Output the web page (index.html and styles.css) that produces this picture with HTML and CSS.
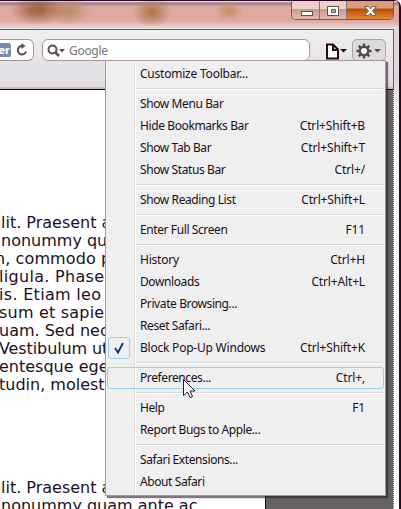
FILE: index.html
```html
<!DOCTYPE html>
<html lang="en"><head><meta charset="utf-8"><title>Browser settings menu</title><link rel="stylesheet" href="styles.css"></head>
<body><div class="window">
<header class="titlebar"><div class="controls">
<span class="ctl min"><svg width="28" height="19"><rect x="9.5" y="10.5" width="11" height="4" fill="#fff" stroke="#555"/></svg></span>
<span class="ctl max"><svg width="26" height="19"><path d="M7.500 5.500h11v9h-11zM11.500 8.500v3h4v-3z" fill="#fff" fill-rule="evenodd" stroke="#555"/></svg></span>
<span class="ctl close"><svg width="46" height="19"><path d="M17.500 5.500h4l2 2.500 2-2.500h4l-4 4.500 4 4.500h-4l-2-2.500-2 2.500h-4l4-4.500z" fill="#fff" stroke="#666"/></svg></span>
</div></header>
<div class="toolbar">
<div class="address"><span class="reader">er</span><svg class="reload" width="12" height="14" viewBox="0 0 12 14"><path d="M6.500 3A4.200 4.200 0 1 0 10 8.500" fill="none" stroke="#555053" stroke-width="2"/><path d="M5.500 0v6l4-3z" fill="#555053"/></svg></div>
<div class="search"><svg width="20" height="14"><circle cx="5.500" cy="5.500" r="4" fill="none" stroke="#555053" stroke-width="2"/><path d="M8.500 8.500l3.500 3.500" stroke="#555053" stroke-width="2.500"/><path d="M12 5h6l-3 3.500z" fill="#555053"/></svg><span>Google</span></div>
<div class="tool page"><svg width="24" height="17"><path d="M2 1.500h6l5 5v9H2zM8 2v5h5" fill="#fff" stroke="#21081c" stroke-width="2"/><path d="M15 6h7l-3.500 3.500z" fill="#21081c"/></svg></div>
<div class="tool gear"><svg width="26" height="16"><g stroke="#514c50" fill="none"><circle cx="8" cy="8" r="4.200" fill="#fff" stroke-width="2.500"/><path d="M8 .500v3M8 12.500v3M.500 8h3M12.500 8h3M2.700 2.700l2.100 2.100M11.200 11.200l2.100 2.100M2.700 13.300l2.100-2.100M11.200 4.800l2.100-2.100" stroke-width="2.500"/></g><path d="M18 6h7l-3.500 3.500z" fill="#514c50"/></svg></div>
</div>
<main class="viewport"><article class="paper">
<div class="para">
<p class="l1">lit. Praesent a</p><p class="l2">nonummy qu</p><p class="l3">n, commodo p</p><p class="l4">ligula. Phase</p><p class="l5">is. Etiam leo</p><p class="l6">sum et sapie</p><p class="l7">uam. Sed nec</p><p class="l8">Vestibulum ut</p><p class="l9">entesque eget</p><p class="l10">tudin, molest</p>
</div>
<div class="para"><p class="l1">lit. Praesent a</p><p class="l2">nonummy quam ante ac</p></div>
</article></main>
<nav class="menu">
<div class="item wide"><span>Customize Toolbar...</span></div><hr>
<div class="item"><span>Show Menu Bar</span></div>
<div class="item"><span>Hide Bookmarks Bar</span><kbd>Ctrl+Shift+B</kbd></div>
<div class="item"><span>Show Tab Bar</span><kbd>Ctrl+Shift+T</kbd></div>
<div class="item"><span>Show Status Bar</span><kbd>Ctrl+/</kbd></div><hr>
<div class="item"><span>Show Reading List</span><kbd>Ctrl+Shift+L</kbd></div><hr>
<div class="item"><span>Enter Full Screen</span><kbd>F11</kbd></div><hr>
<div class="item wide"><span>History</span><kbd>Ctrl+H</kbd></div>
<div class="item"><span>Downloads</span><kbd>Ctrl+Alt+L</kbd></div>
<div class="item"><span>Private Browsing...</span></div>
<div class="item"><span>Reset Safari...</span></div>
<div class="item wide"><i class="check"><svg width="20" height="20"><path d="M6 10l3 4.500L14 5" fill="none" stroke="#0c3b8c" stroke-width="2"/></svg></i><span>Block Pop-Up Windows</span><kbd>Ctrl+Shift+K</kbd></div><hr>
<div class="item selected"><span>Preferences...</span><kbd>Ctrl+,</kbd></div><hr>
<div class="item"><span>Help</span><kbd>F1</kbd></div>
<div class="item"><span>Report Bugs to Apple...</span></div><hr>
<div class="item"><span>Safari Extensions...</span></div>
<div class="item"><span>About Safari</span></div>
</nav>
<svg class="cursor" width="13" height="20"><path d="M.500.500v16l4-3.500 2.500 5.500 2.500-1-2.500-5.500h5z" fill="#fff" stroke="#21182a"/></svg>
</div></body></html>
```
FILE: styles.css
```css
*{box-sizing:border-box}
body{margin:0;width:401px;height:509px;overflow:hidden;background:#fff}
.window{position:relative;width:401px;height:509px;overflow:hidden;border-right:2px solid #2c0722;border-top-right-radius:7px;background:linear-gradient(#e6d5d3 0,#ded7dc 80px,#fff 125px)}
.titlebar{height:29px;border-top:1px solid #29001f;background:radial-gradient(ellipse 28px 15px at 38px 9px,#945a32cc 20%,#945a3200),radial-gradient(ellipse 22px 14px at 69px 10px,#bc8d6a 10%,#bc8d6a00),radial-gradient(ellipse 20px 15px at 152px 11px,#ad7a50 10%,#ad7a5000),radial-gradient(ellipse 14px 10px at 229px 10px,#c48f68 10%,#c48f6800),linear-gradient(#efeaec 0 1px,#a58b92 1px 4px,#dfa9a2 5px 20px,#e4c9c7 25px,#ece5e5);display:flex;justify-content:flex-end;padding-right:5px}
.controls{display:flex;height:19px;border:1px solid #71595f;border-top:0;border-radius:0 0 5px 5px;overflow:hidden}
.ctl{height:19px;background:linear-gradient(#eed0cb 0 8px,#c99791 8px,#e7bcb5);border-right:1px solid #8c6c70;box-shadow:inset 0 -1px #fff8}
.ctl svg{display:block}
.min{width:28px}.max{width:27px}
.close{width:46px;border:0;background:linear-gradient(#d99d78 0 7px,#b54b08 8px,#e89033)}
.toolbar{width:394px;height:61px;border:solid #626060;border-width:1px 1px 0 0;border-bottom:1px solid #29001f;background:linear-gradient(#f0efef,#e3e0e5 70%,#e0dde1 57px,#b5a3a7 58px,#d5c9cb);display:flex;align-items:flex-start;padding-top:9px}
.address{width:34px;height:22px;border:1px solid #a69399;border-left:0;border-radius:0 6px 6px 0;background:#fff;display:flex;align-items:center}
.reader{width:11px;height:14px;border-radius:0 2px 2px 0;background:#718caf;color:#fff;font:bold 11px/13px "Noto Sans",sans-serif;display:flex;justify-content:flex-end;padding-right:1px}
.reload{margin-left:5px}
.search{width:268px;height:22px;margin-left:8px;border:1px solid #a69399;border-radius:6px;background:#fff;display:flex;align-items:center;padding-left:4px;font:12px/20px "Noto Sans",sans-serif;letter-spacing:-.3px;color:#777}
.search span{margin:1px 0 0 2px}
.search svg{margin-top:1px}
.page{margin:4px 0 0 15px}
.gear{width:34px;height:22px;margin-left:3px;padding:3px;border:1px solid #afa2a9;border-radius:5px;background:#ded9df}
.tool svg{display:block}
.viewport{height:419px;width:394px;background:#646263;border-right:1px dotted #ddd}
.paper{height:419px;width:266px;background:#fff;border-right:1px solid #29001f;padding-top:124px;overflow:hidden}
.para{height:265px;font:16px/18px "DejaVu Sans",sans-serif;color:#20101f;white-space:nowrap}
p{margin:0}
.l1{margin-left:1px}.l2{margin-left:1px}.l3{margin-left:-5px;letter-spacing:.1px}.l4{margin-left:-1px;letter-spacing:.3px}.l5{margin-left:-1px;letter-spacing:.3px}.l6{margin-left:-1px;letter-spacing:.2px}.l7{margin-left:-1px}.l8{margin-left:-1px;letter-spacing:-.1px}.l9{margin-left:-1px}.l10{margin-left:-1px}
.menu{position:absolute;left:105px;top:60px;width:281px;height:436px;padding:2px 1px;border:1px solid #a99498;background:linear-gradient(90deg,#efeff0 0 28px,#dddde0 28px 29px,#fff 29px 30px,#efeff0 30px);box-shadow:2px 2px 1px #30182b99;font:12px/22px "Noto Sans",sans-serif;letter-spacing:-.4px;color:#1b0e20}
.item{position:relative;height:22px;display:flex;justify-content:space-between;padding:0 19px 0 33px;white-space:nowrap}
.wide{letter-spacing:-.22px}
.item kbd{font:inherit;letter-spacing:-.15px}
hr{height:2px;margin:3px 0 3px 29px;border:0;border-top:1px solid #dcdce0;border-bottom:1px solid #fff}
.selected{border:1px solid #9ccfe9;border-radius:3px;line-height:20px;padding:0 18px 0 32px}
.check{position:absolute;left:1px;top:0;width:22px;height:22px;border:1px solid #9ccfe9;border-radius:3px}
.check svg{display:block}
.cursor{position:absolute;left:183px;top:379px}
```
